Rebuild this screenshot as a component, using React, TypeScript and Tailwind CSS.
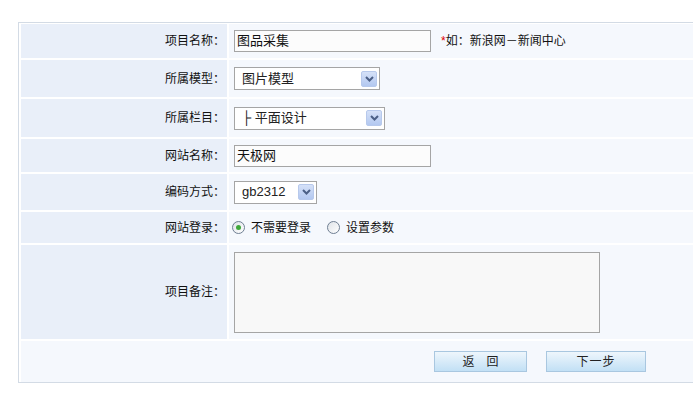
import type { ReactNode } from "react";

function Row({ label, h, children }: { label: string; h: string; children: ReactNode }) {
    return (
        <div className={`flex gap-[2px] ${h}`}>
            <div className="w-[206px] shrink-0 bg-[#e9eff9] flex items-center justify-end pr-[2px] text-[12px] text-[#111]">
                {label}
            </div>
            <div className="flex-1 bg-[#f5f8fd] flex items-center pl-[5px] text-[12px] text-[#111]">
                {children}
            </div>
        </div>
    );
}

function Arrow() {
    return (
        <span className="w-[16px] h-[16px] rounded-[2px] bg-gradient-to-b from-[#d5e1f8] to-[#b3c8f0] border border-[#b7c9ec] flex items-center justify-center">
            <svg width="9" height="6" viewBox="0 0 9 6">
                <path d="M1 1 L4.5 4.5 L8 1" fill="none" stroke="#4b5f86" strokeWidth="2"/>
            </svg>
        </span>
    );
}

function Select({ value, w }: { value: string; w: string }) {
    return (
        <div className={`${w} h-[23px] border border-[#a5a5a5] bg-white flex items-center justify-between pl-[7px] pr-[2px] text-[13px] text-[#222]`}>
            <span>{value}</span>
            <Arrow/>
        </div>
    );
}

function Radio({ checked }: { checked?: boolean }) {
    return (
        <span className="w-[13px] h-[13px] rounded-full border border-[#6f7f93] bg-gradient-to-br from-[#dfe3e8] to-white flex items-center justify-center">
            {checked && <span className="w-[5px] h-[5px] rounded-full bg-[#3fa83a]"/>}
        </span>
    );
}

export default function App() {
    return (
        <div className="w-[693px] h-[398px] overflow-hidden bg-white font-['Liberation_Sans','Noto_Sans_CJK_SC',sans-serif]">
            <div className="mt-[22px] ml-[18px] w-[700px] border border-[#d3dbe5] pt-px pl-[2px] flex flex-col gap-[2px]">
                <Row label="项目名称：" h="h-[34px]">
                    <div className="w-[197px] h-[22px] border border-[#a5a5a5] bg-[#fcfcfc] flex items-center pl-[2px] text-[13px]">图品采集</div>
                    <span className="ml-[10px] text-[#e00000]">*</span>
                    <span>如：新浪网－新闻中心</span>
                </Row>
                <Row label="所属模型：" h="h-[37px]">
                    <Select value="图片模型" w="w-[146px]"/>
                </Row>
                <Row label="所属栏目：" h="h-[38px]">
                    <Select value="├ 平面设计" w="w-[151px]"/>
                </Row>
                <Row label="网站名称：" h="h-[33px]">
                    <div className="w-[197px] h-[22px] border border-[#a5a5a5] bg-[#fcfcfc] flex items-center pl-[2px] text-[13px]">天极网</div>
                </Row>
                <Row label="编码方式：" h="h-[36px]">
                    <Select value="gb2312" w="w-[83px]"/>
                </Row>
                <Row label="网站登录：" h="h-[31px]">
                    <div className="flex items-center gap-[6px] -ml-[2px]">
                        <Radio checked/>
                        <span>不需要登录</span>
                    </div>
                    <div className="flex items-center gap-[6px] ml-[16px]">
                        <Radio/>
                        <span>设置参数</span>
                    </div>
                </Row>
                <Row label="项目备注：" h="h-[94px]">
                    <div className="w-[366px] h-[81px] border border-[#a5a5a5] bg-[#f8f8f8]"/>
                </Row>
                <div className="h-[41px] bg-[#f5f8fd] flex items-center pl-[413px] gap-[19px] text-[12px] text-[#222]">
                    <button className="w-[93px] h-[21px] border border-[#a9c7e0] bg-gradient-to-b from-[#eef6fc] to-[#c2e0f5] flex items-center justify-center">
                        返　回
                    </button>
                    <button className="w-[100px] h-[21px] border border-[#a9c7e0] bg-gradient-to-b from-[#eef6fc] to-[#c2e0f5] flex items-center justify-center tracking-[1px]">
                        下一步
                    </button>
                </div>
            </div>
        </div>
    );
}
